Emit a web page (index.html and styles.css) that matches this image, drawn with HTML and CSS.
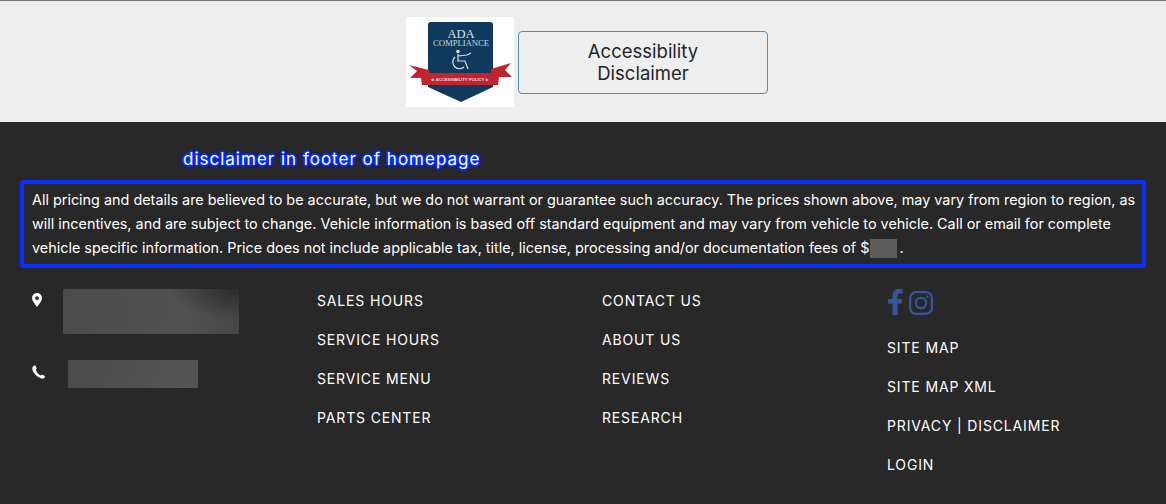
FILE: index.html
```html
<!DOCTYPE html>
<html lang="en">
<head>
<meta charset="utf-8">
<title>Footer</title>
<link rel="stylesheet" href="styles.css">
</head>
<body>
<section class="ada">
  <div class="ada-logo">
    <svg width="108" height="90" viewBox="0 0 108 90">
      <rect width="108" height="90" fill="#fff"/>
      <path d="M25 5h59q3 0 3 3v62l-32 15-33-15V8q0-3 3-3z" fill="#0f3a5e"/>
      <path d="M3 48l20 5 1 8-8 7-1-7H4l7-7z" fill="#c0252f"/>
      <path d="M105 46l-20 6-1 9 8 7 1-8h13l-7-7z" fill="#c0252f"/>
      <rect x="16" y="56" width="76" height="12" fill="#c0252f"/>
      <text x="55" y="20.500" class="logo-ada">ADA</text>
      <text x="55" y="29" class="logo-comp">COMPLIANCE</text>
      <circle cx="52" cy="34.500" r="1.800" fill="#d8e2ea"/>
      <path d="M52 37v7h7l3 8M52 39l9-1 4-2M49 40a6.500 6.500 0 1 0 9 10" fill="none" stroke="#d8e2ea" stroke-width="1.200"/>
      <text x="54" y="64" class="logo-policy">★ ACCESSIBILITY POLICY ★</text>
    </svg>
  </div>
  <a class="ada-btn" href="#">Accessibility Disclaimer</a>
</section>
<footer class="footer">
  <p class="note"><span class="note-text">disclaimer in footer of homepage</span></p>
  <p class="disclaimer">All pricing and details are believed to be accurate, but we do not warrant or guarantee such accuracy. The prices shown above, may vary from region to region, as will incentives, and are subject to change. Vehicle information is based off standard equipment and may vary from vehicle to vehicle. Call or email for complete vehicle specific information. Price does not include applicable tax, title, license, processing and/or documentation fees of $<span class="redact"></span>.</p>
  <div class="cols">
    <div class="col contact">
      <div class="contact-row address">
        <svg class="pin" width="10" height="14" viewBox="0 0 10 14"><path fill-rule="evenodd" d="M5 0a5 5 0 0 1 5 5c0 3-3 6-5 9-2-3-5-6-5-9a5 5 0 0 1 5-5zm0 3.200a1.900 1.900 0 1 0 0 3.800 1.900 1.900 0 0 0 0-3.800z" fill="#fff"/></svg>
        <div class="blur blur-address"></div>
      </div>
      <div class="contact-row phone">
        <svg class="tel" width="14" height="14" viewBox="0 0 14 14"><path d="M1.200 1.200C2 .4 3 .2 3.500.8l1 2.300c.2.500 0 .9-.8 1.600.5 2 2.600 4.700 5.100 5.800.9-.8 1.400-1 1.900-.7l2 1.300c.5.500.3 1.300-.5 2-1.200 1-3.200.6-5.500-.8C3.500 10.500.7 6.800.3 4 .2 2.900.5 1.900 1.200 1.200z" fill="#fff"/></svg>
        <div class="blur blur-phone"></div>
      </div>
    </div>
    <ul class="col links">
      <li><a href="#">SALES HOURS</a></li>
      <li><a href="#">SERVICE HOURS</a></li>
      <li><a href="#">SERVICE MENU</a></li>
      <li><a href="#">PARTS CENTER</a></li>
    </ul>
    <ul class="col links">
      <li><a href="#">CONTACT US</a></li>
      <li><a href="#">ABOUT US</a></li>
      <li><a href="#">REVIEWS</a></li>
      <li><a href="#">RESEARCH</a></li>
    </ul>
    <div class="col">
      <div class="social">
        <svg width="15" height="26" viewBox="0 0 15 26"><path d="M4.500 26V14.500H0V10h4.500V6.500C4.500 2.300 7 0 10.800 0c1.700 0 3.200.1 3.700.2v4.300h-2.600c-2 0-2.400 1-2.400 2.400V10h4.800l-.6 4.500H9.500V26z" fill="#34569b"/></svg>
        <svg width="24" height="24" viewBox="0 0 24 24" fill="none" stroke="#34569b" stroke-width="2.200"><rect x="1.100" y="1.100" width="21.800" height="21.800" rx="6"/><circle cx="12" cy="12" r="5.200"/><circle cx="18.300" cy="5.700" r="1.300" fill="#34569b" stroke="none"/></svg>
      </div>
      <ul class="links">
        <li><a href="#">SITE MAP</a></li>
        <li><a href="#">SITE MAP XML</a></li>
        <li><a href="#">PRIVACY | DISCLAIMER</a></li>
        <li><a href="#">LOGIN</a></li>
      </ul>
    </div>
  </div>
</footer>
</body>
</html>
```
FILE: styles.css
```css
* { box-sizing: border-box; }
html, body { margin: 0; padding: 0; }
body {
  width: 1166px;
  height: 504px;
  overflow: hidden;
  background: #282828;
  font-family: Inter, "Noto Sans", sans-serif;
}
.ada {
  height: 122px;
  background: #eeeeee;
  border-top: 1px solid #777;
  display: flex;
  justify-content: center;
  align-items: flex-start;
  gap: 4px;
  padding-top: 16px;
  padding-left: 8px;
}
.ada-logo { height: 90px; }
.ada-logo svg { display: block; }
.logo-ada { font: 400 12.500px "Liberation Serif", serif; fill: #d8e2ea; text-anchor: middle; }
.logo-comp { font: 400 8.800px "Liberation Serif", serif; fill: #c9d5df; text-anchor: middle; letter-spacing: -.1px; }
.logo-policy { font: 700 4.200px "Liberation Sans", sans-serif; fill: #f3dfe0; text-anchor: middle; }
.ada-btn {
  margin-top: 14px;
  width: 250px;
  height: 63px;
  border: 1px solid #4a8ec7;
  border-radius: 4px;
  padding: 0 55px 2px;
  display: flex;
  align-items: center;
  text-align: center;
  color: #20252b;
  font-size: 18.500px;
  line-height: 22px;
  text-decoration: none;
}
.footer { padding: 25px 20px 0; }
.note {
  margin: 0 0 8px 163px;
  height: 25px;
  font-size: 17px;
  line-height: 25px;
  letter-spacing: 1px;
  color: #fff;
}
.note-text { text-shadow: 0 0 2px #0a2fff, 0 0 2px #0a2fff, 0 0 3px #0a2fff, 1px 1px 1px #0a2fff, -1px -1px 1px #0a2fff, 1px -1px 1px #0a2fff, -1px 1px 1px #0a2fff, 2px 0 1px #0a2fff, -2px 0 1px #0a2fff, 0 2px 1px #0a2fff, 0 -2px 1px #0a2fff; }
.disclaimer {
  margin: 0;
  height: 88px;
  border: 4px solid #0a2fff;
  border-radius: 4px;
  padding: 4px 2px 4px 8px;
  font-size: 14.400px;
  line-height: 24px;
  color: #fff;
}
.redact {
  display: inline-block;
  width: 27px;
  height: 19px;
  margin: 0 2px 0 1px;
  background: #5c5c5c;
  vertical-align: -5px;
}
.cols {
  display: grid;
  grid-template-columns: repeat(4, 285px);
  padding: 21px 0 0 12px;
}
.col { margin: 0; padding: 0; min-width: 0; }
.links { list-style: none; margin: 0; padding: 0; }
.links li { height: 39px; line-height: 23px; }
.links a { color: #fff; text-decoration: none; font-size: 14px; letter-spacing: .85px; }
.contact-row { display: flex; align-items: flex-start; }
.pin { margin-top: 4px; }
.address { height: 71px; }
.blur-address {
  margin-left: 21px;
  width: 176px;
  height: 45px;
  background: radial-gradient(ellipse 70px 30px at 100% 0, #2e2e2e 10%, transparent 100%), linear-gradient(100deg, #4a4b4b 0%, #515151 70%, #464646 100%);
}
.tel { margin-top: 5px; }
.blur-phone {
  margin-left: 22px;
  width: 130px;
  height: 28px;
  background: linear-gradient(100deg, #4a4b4b, #555);
}
.social {
  display: flex;
  align-items: flex-start;
  gap: 6px;
  height: 35px;
  margin-bottom: 12px;
  margin-left: 1px;
}
.social svg { display: block; }
.social svg + svg { margin-top: 2px; }
```
